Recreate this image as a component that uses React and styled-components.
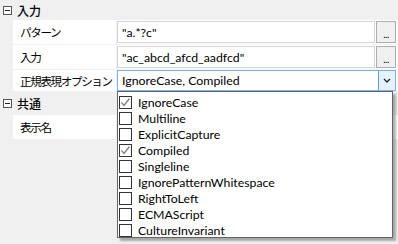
import styled, { createGlobalStyle } from "styled-components";

const Global = createGlobalStyle`
  html, body { margin: 0; padding: 0; background: #f0f0f0; }
  body { font-family: Lato, "Noto Sans CJK JP", sans-serif; font-size: 12.3px; color: #000; }
`;

const Grid = styled.div`
  width: 398px;
  height: 244px;
  display: flex;
  flex-direction: column;
  background: #f0f0f0;
  position: relative;
  overflow: hidden;
`;

const Category = styled.div`
  height: ${(p) => p.h}px;
  display: flex;
  align-items: center;
  gap: 5px;
  padding-left: 3px;
  font-family: "Noto Sans CJK JP", sans-serif;
  font-weight: 500;
  font-size: 12px;
  box-sizing: border-box;
`;

const Expander = styled.span`
  width: 9px;
  height: 9px;
  border: 1px solid #555;
  box-sizing: border-box;
  position: relative;
  background: #fff;
  &::after {
    content: "";
    position: absolute;
    left: 1px;
    right: 1px;
    top: 3px;
    height: 1px;
    background: #222;
  }
`;

const Row = styled.div`
  height: ${(p) => p.h}px;
  display: flex;
  padding-left: 13px;
  border-bottom: 1px solid #f0f0f0;
  box-sizing: border-box;
`;

const Label = styled.div`
  width: 104px;
  background: #fff;
  display: flex;
  align-items: center;
  padding-left: 7px;
  box-sizing: border-box;
  font-family: "Noto Sans CJK JP", sans-serif;
  font-size: 11.6px;
  letter-spacing: -1.4px;
  white-space: nowrap;
  overflow: hidden;
  border-right: 1px solid #f0f0f0;
`;

const Value = styled.div`
  flex: 1;
  background: #fff;
  display: flex;
  align-items: ${(p) => (p.top ? "flex-start" : "center")};
  gap: 1px;
  position: relative;
  padding-right: 2px;
`;

const TextBox = styled.div`
  flex: 1;
  height: 22px;
  border: 1px solid #d4d4d4;
  box-sizing: border-box;
  display: flex;
  align-items: center;
  padding-left: 4px;
`;

const DotButton = styled.div`
  width: 20px;
  height: 22px;
  border: 1px solid #adadad;
  background: #f0f0f0;
  box-sizing: border-box;
  display: flex;
  align-items: flex-end;
  justify-content: center;
  font-size: 10px;
  line-height: 15px;
  letter-spacing: -0.5px;
`;

const Combo = styled.div`
  flex: 1;
  height: 21px;
  border: 1px solid #7eb4ea;
  box-sizing: border-box;
  display: flex;
  align-items: center;
  padding-left: 4px;
`;

const ComboButton = styled.div`
  margin-left: auto;
  width: 17px;
  height: 19px;
  background: #e5f1fb;
  border-left: 1px solid #569de5;
  box-sizing: border-box;
  display: flex;
  align-items: center;
  justify-content: center;
`;

const Dropdown = styled.div`
  position: absolute;
  left: 0;
  top: 21px;
  width: 276px;
  height: 147px;
  background: #fff;
  border: 1px solid #646464;
  box-sizing: border-box;
  box-shadow: 3px 3px 2px rgba(0, 0, 0, 0.3);
  padding-top: 2px;
  z-index: 5;
`;

const Item = styled.div`
  height: 16px;
  display: flex;
  align-items: center;
  gap: 6px;
  padding-left: 1px;
`;

const Box = styled.span`
  width: 13px;
  height: 13px;
  border: 1px solid #333;
  box-sizing: border-box;
  background: #fff;
  display: flex;
  align-items: center;
  justify-content: center;
`;

const options = [
  ["IgnoreCase", true],
  ["Multiline", false],
  ["ExplicitCapture", false],
  ["Compiled", true],
  ["Singleline", false],
  ["IgnorePatternWhitespace", false],
  ["RightToLeft", false],
  ["ECMAScript", false],
  ["CultureInvariant", false],
];

const Check = () => (
  <svg width="11" height="11" viewBox="0 0 11 11">
    <path d="M1.5 5.5 L4 8.5 L9.5 1.5" fill="none" stroke="#808080" strokeWidth="1.3" />
  </svg>
);

export default function App() {
  return (
    <>
      <Global />
      <Grid>
        <Category h={20}>
          <Expander />
          入力
        </Category>
        <Row h={25}>
          <Label>パターン</Label>
          <Value>
            <TextBox>"a.*?c"</TextBox>
            <DotButton>...</DotButton>
          </Value>
        </Row>
        <Row h={25}>
          <Label>入力</Label>
          <Value>
            <TextBox>"ac_abcd_afcd_aadfcd"</TextBox>
            <DotButton>...</DotButton>
          </Value>
        </Row>
        <Row h={22}>
          <Label>正規表現オプション</Label>
          <Value top>
            <Combo>
              IgnoreCase, Compiled
              <ComboButton>
                <svg width="8" height="5" viewBox="0 0 8 5">
                  <path d="M1 1 L4 4 L7 1" fill="none" stroke="#222" strokeWidth="1.3" />
                </svg>
              </ComboButton>
            </Combo>
            <Dropdown>
              {options.map(([name, on]) => (
                <Item key={name}>
                  <Box>{on && <Check />}</Box>
                  {name}
                </Item>
              ))}
            </Dropdown>
          </Value>
        </Row>
        <Category h={23}>
          <Expander />
          共通
        </Category>
        <Row h={25}>
          <Label>表示名</Label>
          <Value />
        </Row>
      </Grid>
    </>
  );
}
